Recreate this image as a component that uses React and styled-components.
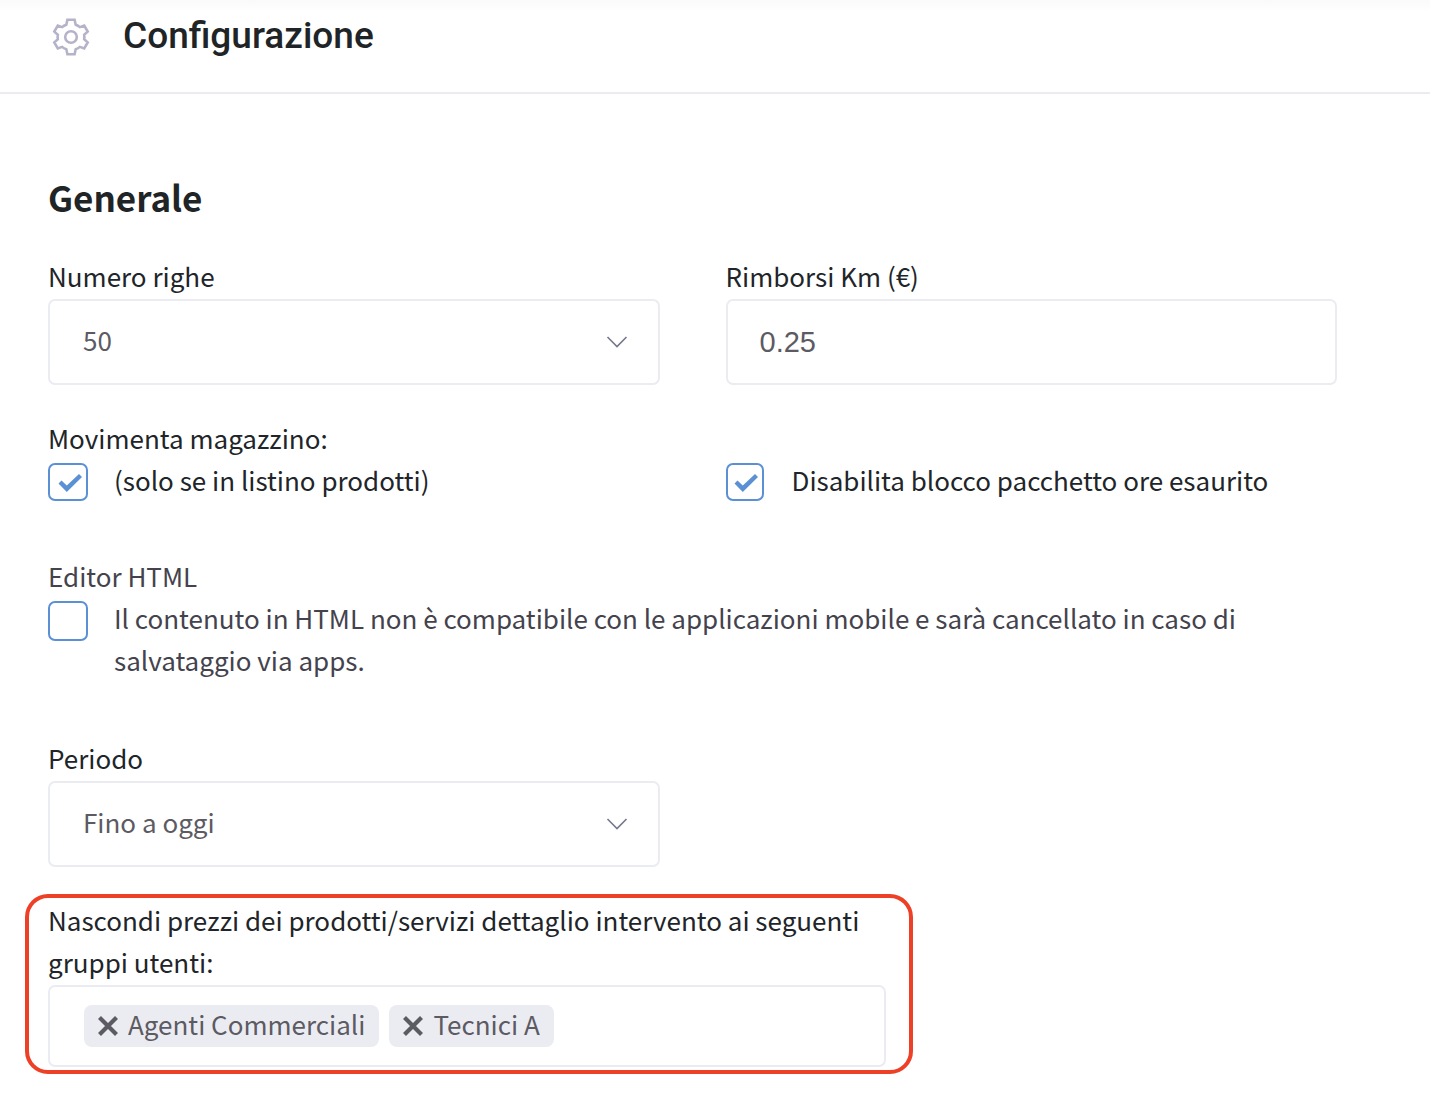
import React, { useState } from "react";
import styled, { createGlobalStyle } from "styled-components";

const GlobalStyle = createGlobalStyle`
  *, *::before, *::after { box-sizing: border-box; }
  body {
    margin: 0;
    background: #fff;
    color: #212529;
    font-family: "Noto Sans CJK SC", "Noto Sans", sans-serif;
    font-size: 26px;
    line-height: 42px;
  }
`;

const Header = styled.header`
  display: flex;
  align-items: center;
  gap: 32px;
  height: 94px;
  padding: 0 50px 20px;
  border-bottom: 2px solid #ebecf2;
  background: linear-gradient(#fafafa, #fff 12px);
`;

const PageTitle = styled.h1`
  margin: 0;
  font-family: Roboto, sans-serif;
  font-size: 37px;
  font-weight: 500;
  line-height: 48px;
  color: #1f2427;
`;

const Form = styled.form`
  padding: 76px 93px 31px 48px;
`;

const SectionTitle = styled.h2`
  margin: 0 0 31px;
  font-size: 35px;
  font-weight: 700;
  line-height: 54px;
  color: #1f2427;
`;

const Grid = styled.div`
  display: grid;
  grid-template-columns: 1fr 1fr;
  column-gap: 66px;
  align-items: end;
  margin-bottom: ${(p) => p.$space}px;
`;

const Field = styled.div`
  min-width: 0;
  color: ${(p) => (p.$muted ? "#44434d" : "inherit")};
  grid-column: ${(p) => (p.$full ? "1 / -1" : "auto")};
`;

const Caption = styled.div`
  padding-bottom: ${(p) => (p.$aboveBox ? 2 : 0)}px;
`;

const Label = styled.label`
  display: block;
`;

const SelectBox = styled.div`
  display: grid;
  align-items: center;

  > * { grid-area: 1 / 1; }
  > svg {
    justify-self: end;
    margin-right: 32px;
    pointer-events: none;
  }
`;

const Select = styled.select`
  appearance: none;
  width: 100%;
  height: 86px;
  padding: 0 64px 4px 33px;
  border: 2px solid #ebecf2;
  border-radius: 7px;
  background: #fff;
  color: #5c5a63;
  font: inherit;
`;

const TextInput = styled.input`
  display: block;
  width: 100%;
  height: 86px;
  padding: 0 32px;
  border: 2px solid #ebecf2;
  border-radius: 7px;
  background: #fff;
  color: #5c5a63;
  font-family: "Liberation Sans", Arial, sans-serif;
  font-size: 29px;
`;

const CheckRow = styled.div`
  display: grid;
  grid-template-columns: 40px 1fr;
  column-gap: 26px;
  align-items: start;
`;

const CheckBox = styled.span`
  display: grid;
  width: ${(p) => p.$width}px;
  height: ${(p) => p.$height}px;
  margin-top: 4px;

  > * { grid-area: 1 / 1; }
  > svg {
    place-self: center;
    margin: 2px 0 0 3px;
    pointer-events: none;
  }
  > input:not(:checked) + svg { visibility: hidden; }
`;

const CheckInput = styled.input`
  appearance: none;
  width: 100%;
  height: 100%;
  margin: 0;
  border: 2px solid #5b90d5;
  border-radius: 7px;
  background: #fff;
`;

const HighlightedField = styled(Field)`
  position: relative;
  width: 65%;

  &::after {
    content: "";
    position: absolute;
    inset: -5px -27px -7px -23px;
    border: 4px solid #ee4026;
    border-radius: 23px;
    pointer-events: none;
  }
`;

const TagBox = styled.div`
  display: flex;
  align-items: center;
  gap: 10px;
  height: 82px;
  padding: 0 34px;
  border: 2px solid #ebecf2;
  border-radius: 7px;
`;

const Tag = styled.span`
  display: flex;
  align-items: center;
  gap: 10px;
  height: 42px;
  padding: 0 14px;
  border-radius: 8px;
  background: #ebecf2;
  color: #5c5a63;
  white-space: nowrap;
`;

const TagText = styled.span`
  padding-bottom: 4px;
`;

const RemoveButton = styled.button`
  display: flex;
  padding: 0;
  border: 0;
  background: none;
  color: inherit;
`;

const GearIcon = () => (
  <svg width="41" height="42" viewBox="-21 -22 41 42" fill="none" stroke="#b4b3c9" strokeWidth="2.6" aria-hidden="true">
    <path d="M-3.6-17.3H3.6L4.7-12.3Q7.1-11.5 8.9-9.9L13.2-11.5L16.7-5.4L13.2-2.3Q13.6 0 13.2 2.3L16.7 5.4L13.2 11.5L8.9 9.9Q7.1 11.5 4.7 12.3L3.6 17.3H-3.6L-4.7 12.3Q-7.1 11.5-8.9 9.9L-13.2 11.5L-16.7 5.4L-13.2 2.3Q-13.6 0-13.2-2.3L-16.7-5.4L-13.2-11.5L-8.9-9.9Q-7.1-11.5-4.7-12.3Z" />
    <circle r="5.8" />
  </svg>
);

const Chevron = () => (
  <svg width="22" height="14" viewBox="0 0 22 14" fill="none" stroke="#74788d" strokeWidth="1.6" aria-hidden="true">
    <path d="M1.5 2L11 11.5L20.5 2" />
  </svg>
);

const CheckMark = () => (
  <svg width="24" height="20" viewBox="0 0 24 20" fill="#5b90d5" aria-hidden="true">
    <path d="M0.5 10.5L3.5 7.5L8.8 12.5L21 1L24 4L8.8 19Z" />
  </svg>
);

const CrossIcon = () => (
  <svg width="20" height="20" viewBox="0 0 20 20" fill="none" stroke="currentColor" strokeWidth="4.2" aria-hidden="true">
    <path d="M1.5 1.5L18.5 18.5M18.5 1.5L1.5 18.5" />
  </svg>
);

function SelectField({ id, label, options }) {
  return (
    <Field>
      <Caption $aboveBox>
        <Label htmlFor={id}>{label}</Label>
      </Caption>
      <SelectBox>
        <Select id={id} defaultValue={options[0]}>
          {options.map((option) => (
            <option key={option}>{option}</option>
          ))}
        </Select>
        <Chevron />
      </SelectBox>
    </Field>
  );
}

function CheckField({ id, text, checked, width = 40, height = 38 }) {
  return (
    <CheckRow>
      <CheckBox $width={width} $height={height}>
        <CheckInput type="checkbox" id={id} defaultChecked={checked} />
        <CheckMark />
      </CheckBox>
      <Label htmlFor={id}>{text}</Label>
    </CheckRow>
  );
}

export default function App() {
  const [groups, setGroups] = useState(["Agenti Commerciali", "Tecnici A"]);

  return (
    <>
      <GlobalStyle />
      <Header>
        <GearIcon />
        <PageTitle>Configurazione</PageTitle>
      </Header>
      <Form>
        <SectionTitle>Generale</SectionTitle>
        <Grid $space={32}>
          <SelectField id="rows" label="Numero righe" options={["50"]} />
          <Field>
            <Caption $aboveBox>
              <Label htmlFor="km">Rimborsi Km (€)</Label>
            </Caption>
            <TextInput id="km" defaultValue="0.25" />
          </Field>
        </Grid>
        <Grid $space={54}>
          <Field>
            <Caption>Movimenta magazzino:</Caption>
            <CheckField id="stock" text="(solo se in listino prodotti)" checked />
          </Field>
          <CheckField id="package" text="Disabilita blocco pacchetto ore esaurito" checked width={38} />
        </Grid>
        <Grid $space={56}>
          <Field $full $muted>
            <Caption>Editor HTML</Caption>
            <CheckField
              id="editor"
              height={40}
              text="Il contenuto in HTML non è compatibile con le applicazioni mobile e sarà cancellato in caso di salvataggio via apps."
            />
          </Field>
        </Grid>
        <Grid $space={32}>
          <SelectField id="period" label="Periodo" options={["Fino a oggi"]} />
        </Grid>
        <HighlightedField role="group" aria-labelledby="groups-label">
          <Caption $aboveBox id="groups-label">
            Nascondi prezzi dei prodotti/servizi dettaglio intervento ai seguenti gruppi utenti:
          </Caption>
          <TagBox>
            {groups.map((group) => (
              <Tag key={group}>
                <RemoveButton
                  type="button"
                  aria-label={`Rimuovi ${group}`}
                  onClick={() => setGroups(groups.filter((g) => g !== group))}
                >
                  <CrossIcon />
                </RemoveButton>
                <TagText>{group}</TagText>
              </Tag>
            ))}
          </TagBox>
        </HighlightedField>
      </Form>
    </>
  );
}
